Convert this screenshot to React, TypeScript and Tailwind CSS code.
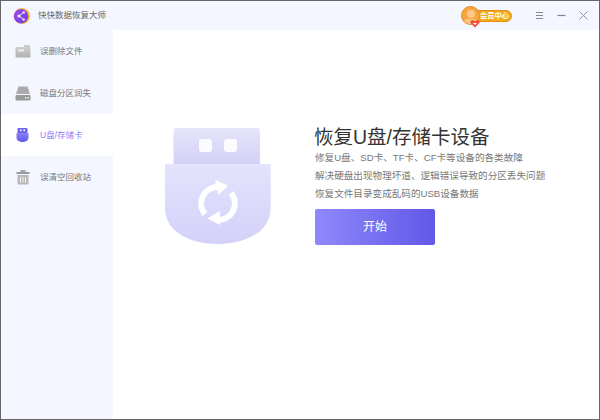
const FONT = "font-['Liberation_Sans','Noto_Sans_CJK_SC',sans-serif]";

const Logo = () => (
  <svg width="18" height="18" viewBox="0 0 18 18">
    <defs>
      <linearGradient id="logoBg" x1="0" y1="0" x2="1" y2="1">
        <stop offset="0" stopColor="#a04be8" />
        <stop offset="1" stopColor="#6a3fe6" />
      </linearGradient>
    </defs>
    <circle cx="9" cy="9" r="8" fill="#f7b93f" />
    <circle cx="8" cy="9.2" r="7.2" fill="url(#logoBg)" />
    <path d="M6 9 L10.5 5.5 M6 9 L10.5 12.5" stroke="#f3e8ff" strokeWidth="0.9" />
    <circle cx="6" cy="9" r="1.6" fill="#f3e8ff" />
    <circle cx="10.7" cy="5.4" r="1.2" fill="#f3e8ff" />
    <circle cx="10.7" cy="12.6" r="1.2" fill="#f3e8ff" />
  </svg>
);

const VipBadge = () => (
  <div className="relative flex items-center w-[51px] h-[20px]">
    <div className="absolute left-[8px] top-[4px] w-[43px] h-[12px] rounded-full bg-[#f6ad1c] border border-[#e48a1c]" />
    <div className="absolute left-0 top-0 w-[19px] h-[19px] rounded-full bg-[#f7a63e] border border-[#e48a1c] overflow-hidden">
      <div className="mx-auto mt-[3px] w-[8px] h-[8px] rounded-full bg-[#fbc88a]" />
      <div className="mx-auto mt-[1px] w-[14px] h-[8px] rounded-full bg-[#fbc88a]" />
    </div>
    <svg className="absolute left-[9px] top-[13px]" width="10" height="9" viewBox="0 0 10 9">
      <path d="M5 8.5 L0.5 4 Q0 1 2.5 1 Q4 1 5 2.5 Q6 1 7.5 1 Q10 1 9.5 4 Z" fill="#f0503c" />
      <path d="M5 6 L3 4 L7 4 Z" fill="#fff" />
    </svg>
    <span className="absolute left-[19px] top-[4px] text-[7.2px] leading-[12px] font-bold text-white whitespace-nowrap">
      会员中心
    </span>
  </div>
);

const FolderIcon = () => (
  <svg width="16" height="14" viewBox="0 0 16 14">
    <defs>
      <linearGradient id="greyA" x1="0" y1="0" x2="0" y2="1">
        <stop offset="0" stopColor="#cfcfcf" />
        <stop offset="1" stopColor="#b0b0b0" />
      </linearGradient>
    </defs>
    <path d="M9 1 H14 Q15 1 15 2 V4 H9 Z" fill="#c8c8c8" />
    <rect x="0.5" y="3" width="15" height="10.5" rx="1" fill="url(#greyA)" />
    <rect x="3" y="5.5" width="6" height="2" fill="#efefef" />
  </svg>
);

const DiskIcon = () => (
  <svg width="16" height="15" viewBox="0 0 16 15">
    <path d="M3.5 0.5 H12.5 L15 8 H1 Z" fill="#ababab" />
    <rect x="0.5" y="9" width="15" height="5.5" rx="1" fill="#9a9a9a" />
    <rect x="10" y="11" width="1.5" height="1.5" fill="#eee" />
    <rect x="12.5" y="11" width="1.5" height="1.5" fill="#eee" />
  </svg>
);

const UsbIcon = () => (
  <svg width="13" height="14" viewBox="0 0 13 14">
    <defs>
      <linearGradient id="usbA" x1="0" y1="0" x2="0" y2="1">
        <stop offset="0" stopColor="#8a80f8" />
        <stop offset="1" stopColor="#6159e8" />
      </linearGradient>
    </defs>
    <rect x="1.5" y="0" width="10" height="6" rx="1" fill="#6e65ee" />
    <rect x="4" y="1.5" width="1.6" height="1.6" fill="#fff" />
    <rect x="7.4" y="1.5" width="1.6" height="1.6" fill="#fff" />
    <path d="M0.5 5 H12.5 V9.5 C12.5 12.5 9.5 14 6.5 14 C3.5 14 0.5 12.5 0.5 9.5 Z" fill="url(#usbA)" />
  </svg>
);

const TrashIcon = () => (
  <svg width="14" height="15" viewBox="0 0 14 15">
    <rect x="4.5" y="0" width="5" height="2" fill="#aaa" />
    <rect x="0.5" y="2" width="13" height="2" fill="#999" />
    <path d="M1.5 5 H12.5 V13.5 Q12.5 14.5 11.5 14.5 H2.5 Q1.5 14.5 1.5 13.5 Z" fill="#b8b8b8" />
    <path d="M4.5 7 V12.5 M7 7 V12.5 M9.5 7 V12.5" stroke="#f4f4f4" strokeWidth="1" />
  </svg>
);

const UsbHero = () => (
  <svg className="shrink-0" width="106" height="118" viewBox="165 127 106 118">
    <defs>
      <linearGradient id="heroTop" x1="0" y1="0" x2="0" y2="1">
        <stop offset="0" stopColor="#e6e5fb" />
        <stop offset="1" stopColor="#d3d0f8" />
      </linearGradient>
      <linearGradient id="heroBody" x1="0" y1="0" x2="0" y2="1">
        <stop offset="0" stopColor="#e3e3fd" />
        <stop offset="1" stopColor="#d3d1f8" />
      </linearGradient>
    </defs>
    <path d="M173.5 164 V131 Q173.5 128 176.5 128 H257 Q260 128 260 131 V164 Z" fill="url(#heroTop)" />
    <rect x="199" y="139" width="13" height="13" rx="3" fill="#fff" fillOpacity="0.9" />
    <rect x="224" y="139" width="13" height="13" rx="3" fill="#fff" fillOpacity="0.9" />
    <path d="M165 164 H270.7 V208 C270.7 232 245 244 218 244 C190 244 165 232 165 208 Z" fill="url(#heroBody)" />
    <g fill="none" stroke="#fff" strokeWidth="6">
      <path d="M205 214 A16.5 16.5 0 0 1 219 187" />
      <path d="M231 193 A16.5 16.5 0 0 1 217 220" />
    </g>
    <path d="M215 179.5 L228 186 L218 195 Z" fill="#fff" />
    <path d="M220 211 L207.5 218.5 L220 225 Z" fill="#fff" />
  </svg>
);

const navItems = [
  { label: "误删除文件", icon: <FolderIcon /> },
  { label: "磁盘分区润失", icon: <DiskIcon /> },
  { label: "U盘/存储卡", icon: <UsbIcon />, active: true },
  { label: "误清空回收站", icon: <TrashIcon /> },
];

export default function App() {
  return (
    <div className={`${FONT} w-[600px] h-[420px] flex flex-col border border-[#666] bg-white overflow-hidden`}>
      <header className="h-[29px] shrink-0 flex items-center bg-[#f4f7ff] pl-[12px] pr-[11px]">
        <Logo />
        <span className="ml-[7px] text-[8.5px] text-[#666]">快快数据恢复大师</span>
        <div className="ml-auto flex items-center">
          <VipBadge />
          <svg className="ml-[23px]" width="9" height="9" viewBox="0 0 9 9" stroke="#888" strokeWidth="1">
            <path d="M1 1.5 H8 M1 4.5 H8 M1 7.5 H8" />
          </svg>
          <svg className="ml-[13px]" width="9" height="9" viewBox="0 0 9 9" stroke="#888" strokeWidth="1.2">
            <path d="M0.5 4.5 H8.5" />
          </svg>
          <svg className="ml-[13px]" width="9" height="9" viewBox="0 0 9 9" stroke="#999" strokeWidth="1">
            <path d="M0.5 0.5 L8.5 8.5 M8.5 0.5 L0.5 8.5" />
          </svg>
        </div>
      </header>
      <div className="flex flex-1 min-h-0">
        <aside className="w-[112px] shrink-0 bg-[#f4f7ff]">
          {navItems.map((item) => (
            <div
              key={item.label}
              className={`h-[42px] flex items-center ${item.active ? "bg-white text-[#8a80f4]" : "text-[#777]"}`}
            >
              <div className="w-[39px] shrink-0 flex justify-center pl-[4px]">{item.icon}</div>
              <span className="text-[8.5px]">{item.label}</span>
            </div>
          ))}
        </aside>
        <main className="flex-1 flex items-start pl-[52px] pt-[97px]">
          <UsbHero />
          <div className="ml-[44px] flex flex-col">
            <h1 className="text-[19.5px] leading-[22px] mt-[-1px] ml-[-1px] font-normal text-[#333]">恢复U盘/存储卡设备</h1>
            <p className="mt-[1px] text-[9.6px] leading-[18px] text-[#777]">修复U盘、SD卡、TF卡、CF卡等设备的各类故障</p>
            <p className="text-[9.6px] leading-[18px] text-[#777]">解决硬盘出现物理坏道、逻辑错误导致的分区丢失问题</p>
            <p className="text-[9.6px] leading-[18px] text-[#777]">恢复文件目录变成乱码的USB设备数据</p>
            <button className="mt-[6px] w-[120px] h-[36px] rounded-[2px] bg-gradient-to-r from-[#9088fb] to-[#6158e8] text-white text-[12px]">
              开始
            </button>
          </div>
        </main>
      </div>
    </div>
  );
}
